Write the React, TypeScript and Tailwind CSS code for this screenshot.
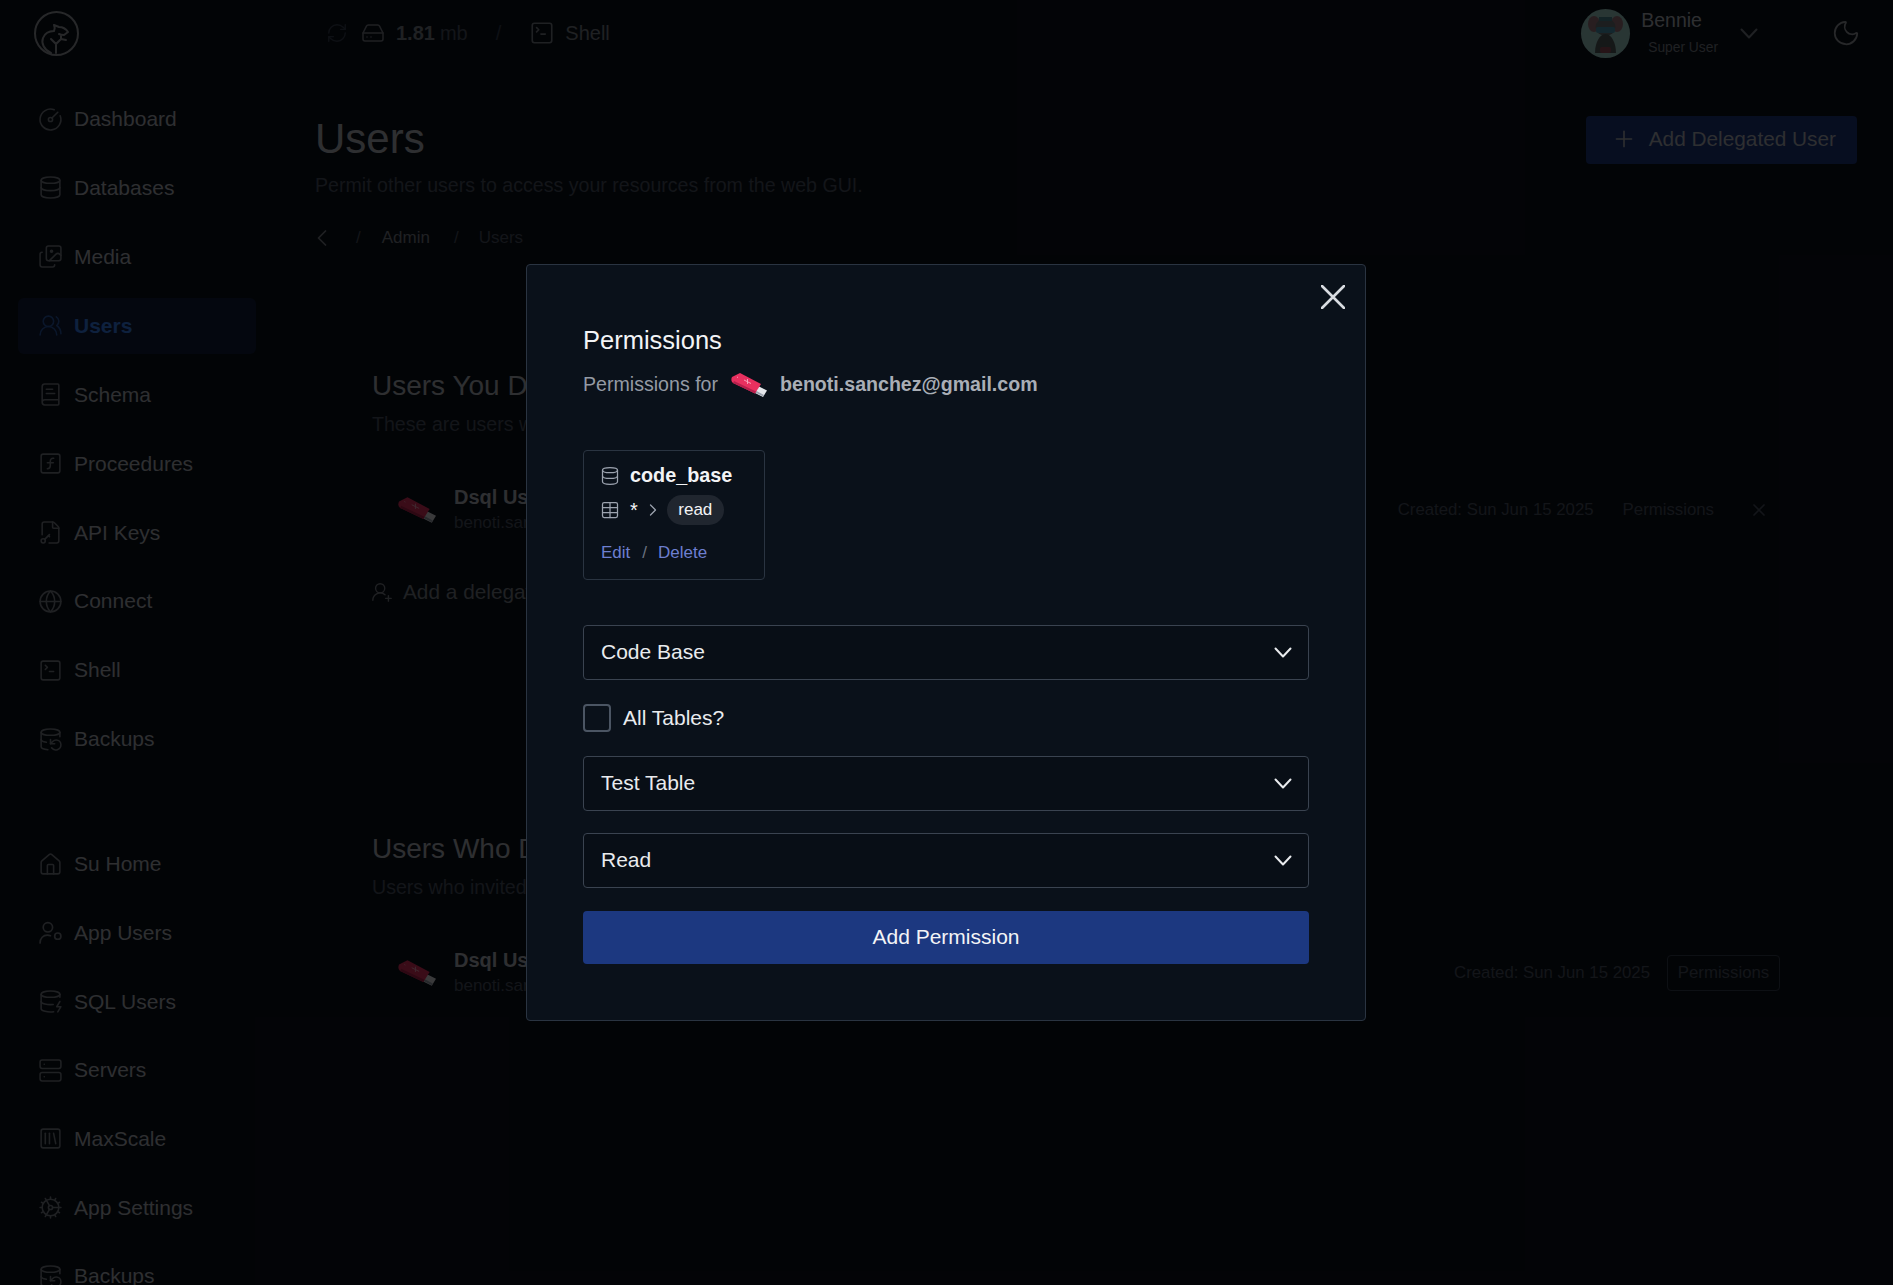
import React from "react";
import {
  BookText, ChevronLeft, ChevronRight, CircleGauge, Cog, Database, DatabaseBackup, DatabaseZap,
  FileKey, Globe, HardDrive, House, Images, Moon, Plus, RefreshCw, Server, SquareFunction, SquareLibrary,
  SquareTerminal, Table, UserRoundPlus, UsersRound, X,
} from "lucide-react";

function Logo() {
  return (
    <svg viewBox="0 0 45 45" className="h-[45px] w-[45px]" fill="none" stroke="currentColor" strokeWidth="2" strokeLinecap="round" strokeLinejoin="round">
      <circle cx="22.5" cy="22.5" r="21.5" />
      <path d="M17 42C10 39 7 32 9 27c2-5 7-7 11-7 1-2 1-4 0-6l5 2c3 0 7 2 9 5l-4 3c-3 0-3 0-5-1" />
      <path d="M22 42V33l-5-5M22 33l5-5 5 1M27 28v-3" />
    </svg>
  );
}

function Chevron({ className }: { className?: string }) {
  return (
    <svg viewBox="0 0 18 11" className={"h-[11px] w-[18px] " + (className ?? "")} fill="none" stroke="currentColor" strokeWidth="2" strokeLinecap="round" strokeLinejoin="round">
      <path d="M1.500 1.500 L9 9.500 L16.500 1.500" />
    </svg>
  );
}

function AppUsersIcon({ size = 25 }: { size?: number }) {
  return (
    <svg viewBox="0 0 24 24" width={size} height={size} fill="none" stroke="currentColor" strokeWidth="1.6" strokeLinecap="round" strokeLinejoin="round">
      <circle cx="9.5" cy="7" r="4.5" />
      <path d="M2 22c0-4.500 3-7.500 7-7.500 1 0 2 .2 3 .6" />
      <circle cx="19" cy="15.500" r="3" />
    </svg>
  );
}

function Usb({ className }: { className?: string }) {
  return (
    <svg viewBox="0 0 36 26" className={className}>
      <path d="M27 14 L36 18.500 L32 25 L22 20Z" fill="#e5e7eb" />
      <path d="M23.500 20 L32 24.500 L33 23 L24.500 18.500Z" fill="#9ca3af" />
      <path d="M1 5 L9 1 L30 12 L24 21.500 L2 11 C0 9.500 0 7 1 5Z" fill="#e8305f" />
      <path d="M2 11 L24 21.500 L25 19.500 L3 9Z" fill="#b5204c" />
      <path d="M13 8 L20 11.500 M16.500 7 L16.500 12 M6 5 L7 5.500" stroke="#f9a8c0" strokeWidth="0.9" fill="none" />
    </svg>
  );
}

function Avatar() {
  return (
    <div className="flex h-[49px] w-[49px] items-center justify-center overflow-hidden rounded-full bg-[#a4d8d0]">
      <svg viewBox="0 0 49 49" className="h-[49px] w-[49px]">
        <ellipse cx="13" cy="15" rx="6" ry="8" fill="#a07880" />
        <ellipse cx="36" cy="15" rx="6" ry="8" fill="#a07880" />
        <ellipse cx="24.500" cy="18" rx="10" ry="9" fill="#6f7a7c" />
        <rect x="15" y="18" width="19" height="6" rx="2" fill="#4d9db8" />
        <path d="M14 44 C14 33 19 25 24.500 25 C30 25 35 33 35 44Z" fill="#566062" />
        <rect x="19" y="38" width="11" height="6" rx="2" fill="#96525c" />
        <rect x="18" y="8" width="13" height="4" fill="#4d8a96" />
      </svg>
    </div>
  );
}

type Item = { label: string; icon: React.ReactNode; active?: boolean };

const I = 25;
const mainNav: Item[] = [
  { label: "Dashboard", icon: <CircleGauge size={I} strokeWidth={1.5} /> },
  { label: "Databases", icon: <Database size={I} strokeWidth={1.5} /> },
  { label: "Media", icon: <Images size={I} strokeWidth={1.5} /> },
  { label: "Users", icon: <UsersRound size={I} strokeWidth={1.5} />, active: true },
  { label: "Schema", icon: <BookText size={I} strokeWidth={1.5} /> },
  { label: "Proceedures", icon: <SquareFunction size={I} strokeWidth={1.5} /> },
  { label: "API Keys", icon: <FileKey size={I} strokeWidth={1.5} /> },
  { label: "Connect", icon: <Globe size={I} strokeWidth={1.5} /> },
  { label: "Shell", icon: <SquareTerminal size={I} strokeWidth={1.5} /> },
  { label: "Backups", icon: <DatabaseBackup size={I} strokeWidth={1.5} /> },
];
const suNav: Item[] = [
  { label: "Su Home", icon: <House size={I} strokeWidth={1.5} /> },
  { label: "App Users", icon: <AppUsersIcon /> },
  { label: "SQL Users", icon: <DatabaseZap size={I} strokeWidth={1.5} /> },
  { label: "Servers", icon: <Server size={I} strokeWidth={1.5} /> },
  { label: "MaxScale", icon: <SquareLibrary size={I} strokeWidth={1.5} /> },
  { label: "App Settings", icon: <Cog size={I} strokeWidth={1.5} /> },
  { label: "Backups", icon: <DatabaseBackup size={I} strokeWidth={1.5} /> },
];

function NavRow({ item }: { item: Item }) {
  return (
    <div className={"flex h-[56px] items-center gap-[11px] rounded-md pl-[20px] text-[21px] " + (item.active ? "bg-[#1e3a8a]/30 font-bold text-[#3b82f6]" : "text-[#b6bac1]")}>
      <span className={"flex w-[25px] justify-center " + (item.active ? "opacity-60" : "text-[#7d828a]")}>{item.icon}</span>
      <span>{item.label}</span>
    </div>
  );
}

function UserRow({ children }: { children: React.ReactNode }) {
  return (
    <div className="flex items-center">
      <Usb className="ml-[26px] h-[28px] w-[38px]" />
      <div className="ml-[18px] flex flex-col">
        <span className="text-[20px] leading-[26px] font-bold text-[#b6bac1]">Dsql User</span>
        <span className="text-[17px] leading-[25px] text-[#4b5563]">benoti.sanchez@gmail.com</span>
      </div>
      <div className="ml-auto flex items-center text-[16.800px] text-[#4b5563]">{children}</div>
    </div>
  );
}

function Select({ label }: { label: string }) {
  return (
    <div className="flex h-[55px] items-center justify-between rounded-[4px] border border-[#3a4350] bg-[#080e16] pr-[16px] pl-[17px] text-[21px] text-[#e9ebee]">
      <span className="-translate-y-[1px]">{label}</span>
      <Chevron />
    </div>
  );
}

export default function App() {
  return (
    <div className="relative flex h-[1285px] w-[1893px] overflow-hidden bg-[#0b111b] font-['Liberation_Sans',Arial,sans-serif]">
      <aside className="flex w-[315px] shrink-0 flex-col">
        <div className="mt-[11px] ml-[34px] text-[#9a9ea5]">
          <Logo />
        </div>
        <nav className="mt-[35px] flex w-[238px] translate-x-[18px] flex-col gap-[12.900px]">
          {mainNav.map((n) => (
            <NavRow key={n.label} item={n} />
          ))}
        </nav>
        <nav className="mt-[69px] flex w-[238px] translate-x-[18px] flex-col gap-[12.700px]">
          {suNav.map((n, i) => (
            <NavRow key={n.label + i} item={n} />
          ))}
        </nav>
      </aside>

      <main className="flex min-w-0 flex-1 flex-col pr-[36px]">
        <div className="flex h-[66px] items-center text-[#7d828a]">
          <RefreshCw size={22} strokeWidth={1.5} className="ml-[11px] text-[#374151]" />
          <HardDrive size={24} strokeWidth={1.5} className="ml-[13px]" />
          <span className="ml-[11px] text-[20px] font-bold">1.81</span>
          <span className="ml-[5px] text-[20px] text-[#4b5563]">mb</span>
          <span className="ml-[28px] text-[20px] text-[#374151]">/</span>
          <SquareTerminal size={26} strokeWidth={1.5} className="ml-[28px]" />
          <span className="ml-[10px] text-[20px]">Shell</span>
          <div className="ml-auto flex items-center">
            <Avatar />
            <div className="ml-[11px] flex flex-col">
              <span className="text-[19.500px] leading-[24px] text-[#b6bac1]">Bennie</span>
              <span className="mt-[6px] ml-[7px] text-[13.800px] leading-[20px] text-[#7d828a]">Super User</span>
            </div>
            <Chevron className="ml-[22px]" />
            <Moon size={30} strokeWidth={1.4} className="ml-[73px] -mr-[4px] text-[#9a9ea5]" />
          </div>
        </div>

        <div className="mt-[50px] flex items-start justify-between">
          <div>
            <h1 className="text-[42px] leading-[46px] text-[#b6bac1]">Users</h1>
            <p className="mt-[10px] text-[19.600px] leading-[26px] text-[#4b5563]">Permit other users to access your resources from the web GUI.</p>
          </div>
          <button className="flex h-[48px] items-center rounded-[4px] bg-[#1c3880] pr-[21px] pb-[2px] pl-[25px] text-[20.800px] text-[#b6bac1]">
            <Plus size={26} strokeWidth={1.5} />
            <span className="ml-[12px]">Add Delegated User</span>
          </button>
        </div>

        <div className="mt-[26px] flex items-center text-[17px] text-[#7d828a]">
          <ChevronLeft size={28} strokeWidth={1.5} className="-ml-[7px]" />
          <span className="ml-[20px] text-[#4b5563]">/</span>
          <span className="ml-[21px]">Admin</span>
          <span className="ml-[24px] text-[#4b5563]">/</span>
          <span className="ml-[20px] text-[#4b5563]">Users</span>
        </div>

        <section className="mt-[117px] mr-[77px] ml-[57px]">
          <h2 className="text-[28px] leading-[34px] text-[#b6bac1]">Users You Delegated Access To</h2>
          <p className="mt-[8px] text-[19.600px] leading-[26px] text-[#4b5563]">These are users who have access to your resources</p>
          <div className="mt-[47px]">
            <UserRow>
              <span>Created: Sun Jun 15 2025</span>
              <span className="ml-[29px]">Permissions</span>
              <X size={20} strokeWidth={2} className="mr-[11px] ml-[35px]" />
            </UserRow>
          </div>
          <div className="mt-[41px] flex items-center text-[20.800px] text-[#7d828a]">
            <UserRoundPlus size={22} strokeWidth={1.5} className="-ml-[1px]" />
            <span className="ml-[10px]">Add a delegated user</span>
          </div>
        </section>

        <section className="mt-[225px] mr-[77px] ml-[57px]">
          <h2 className="text-[28px] leading-[34px] text-[#b6bac1]">Users Who Delegated Access To You</h2>
          <p className="mt-[8px] text-[19.600px] leading-[26px] text-[#4b5563]">Users who invited you to their resources</p>
          <div className="mt-[47px]">
            <UserRow>
              <span>Created: Sun Jun 15 2025</span>
              <span className="ml-[17px] flex h-[36px] w-[113px] items-center justify-center rounded-[4px] border border-[#374151]">Permissions</span>
            </UserRow>
          </div>
        </section>
      </main>

      <div className="absolute inset-0 bg-black/75" />

      <div className="absolute top-[264px] left-[526px] h-[757px] w-[840px] rounded-[4px] border border-[#2a3441] bg-[#0a111a] px-[56px] pt-[57px]">
        <button className="absolute top-[20px] right-[20px] text-[#d9dce1]">
          <svg viewBox="0 0 24 24" className="h-[24px] w-[24px]" fill="none" stroke="currentColor" strokeWidth="2.600" strokeLinecap="round">
            <path d="M1 1 L23 23 M23 1 L1 23" />
          </svg>
        </button>

        <h2 className="text-[25.500px] leading-[36px] text-[#f3f4f6]">Permissions</h2>
        <div className="mt-[13px] flex h-[28px] items-center text-[19.600px]">
          <span className="text-[#949aa4]">Permissions for</span>
          <Usb className="ml-[13px] h-[26px] w-[36px]" />
          <span className="ml-[13px] font-bold text-[#a9aeb6]">benoti.sanchez@gmail.com</span>
        </div>

        <div className="mt-[51px] h-[130px] w-[182px] rounded-[4px] border border-[#2a3441] pt-[11px] pl-[16px]">
          <div className="flex h-[28px] items-center">
            <Database size={20} strokeWidth={1.5} className="text-[#9ca3af]" />
            <span className="ml-[10px] text-[19.800px] font-bold text-[#f3f4f6]">code_base</span>
          </div>
          <div className="mt-[5px] flex h-[30px] items-center">
            <Table size={20} strokeWidth={1.5} className="text-[#9ca3af]" />
            <span className="ml-[10px] text-[20px] text-[#f3f4f6]">*</span>
            <ChevronRight size={20} strokeWidth={1.5} className="ml-[5px] text-[#9ca3af]" />
            <span className="ml-[4px] flex h-[30px] w-[57px] items-center justify-center rounded-full bg-[#20262f] text-[17px] text-[#f3f4f6]">read</span>
          </div>
          <div className="mt-[15px] ml-[1px] flex items-center text-[17px] text-[#6d7fd0]">
            <span>Edit</span>
            <span className="ml-[12px] text-[#6b7280]">/</span>
            <span className="ml-[11px]">Delete</span>
          </div>
        </div>

        <div className="mt-[45px]">
          <Select label="Code Base" />
        </div>
        <div className="mt-[24px] flex h-[28px] items-center">
          <span className="h-[28px] w-[28px] rounded-[4px] border-2 border-[#4b5563]" />
          <span className="ml-[12px] text-[21px] text-[#e9ebee]">All Tables?</span>
        </div>
        <div className="mt-[24px]">
          <Select label="Test Table" />
        </div>
        <div className="mt-[22px]">
          <Select label="Read" />
        </div>
        <button className="mt-[23px] flex h-[53px] w-full items-center justify-center rounded-[4px] bg-[#1c3880] pb-[2px] text-[21px] text-[#f3f4f6]">Add Permission</button>
      </div>
    </div>
  );
}
